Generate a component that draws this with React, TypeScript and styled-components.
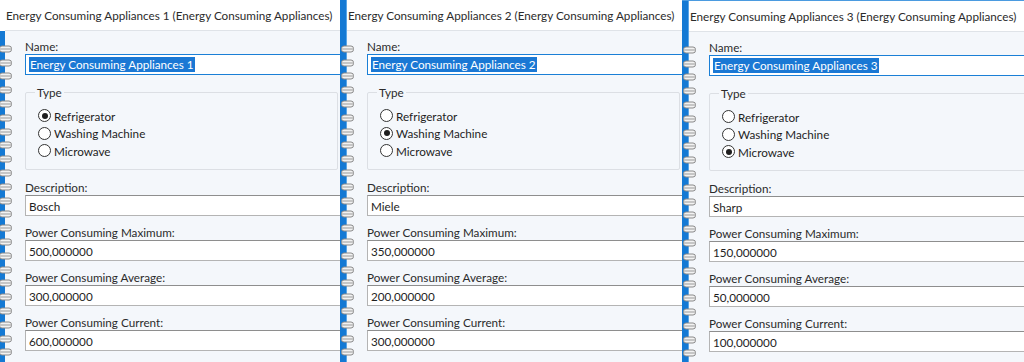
import React from "react"
import styled, { createGlobalStyle } from "styled-components"

const GlobalStyle = createGlobalStyle`
  html, body {
    margin: 0;
    padding: 0;
    background: #ffffff;
    overflow: hidden;
  }
  body {
    font-family: Lato, "Noto Sans", sans-serif;
    font-size: 11.7px;
    color: #1e1e1e;
  }
`

const Desk = styled.div`
  display: flex;
  width: 1030px;
  height: 362px;
  margin-left: -2px;
  overflow: hidden;
`

const Panel = styled.section<{ $width: number; $topLine?: boolean }>`
  display: flex;
  flex: 0 0 ${({ $width }) => $width}px;
  height: 362px;
  overflow: hidden;
  border-top: ${({ $topLine }) => ($topLine ? "1px solid #4b9be0" : "none")};
  box-sizing: border-box;
`

const Spine = styled.div<{ $headless?: boolean }>`
  flex: 0 0 7px;
  background: ${({ $headless }) =>
    $headless
      ? "linear-gradient(to bottom, #ffffff 0 31px, #1479d4 31px)"
      : "linear-gradient(to right, #1479d4 0 6px, #5aa5e6 6px)"};
`

const Main = styled.div`
  flex: 1;
  display: flex;
  flex-direction: column;
  min-width: 0;
`

const Header = styled.div`
  height: 30px;
  flex: 0 0 30px;
  display: flex;
  align-items: center;
  padding-left: 1px;
  background: #ffffff;
  border-bottom: 1px solid #dfe3e8;
  white-space: nowrap;
  color: #2b2b2b;
`

const Body = styled.div`
  flex: 1;
  display: flex;
  background: #f4f7fb;
  min-height: 0;
`

const Rings = styled.div`
  flex: 0 0 16px;
  margin-left: -7px;
  padding-top: 11px;
  display: flex;
  flex-direction: column;
`

const RingCell = styled.div`
  height: 13.8px;
  flex: 0 0 13.8px;
  display: flex;
  align-items: center;
`

const Form = styled.div`
  flex: 1;
  min-width: 0;
  padding: 8px 0 0 11px;
  display: flex;
  flex-direction: column;
`

const Label = styled.div`
  line-height: 15px;
  height: 15px;
  color: #2b2b2b;
  white-space: nowrap;
`

const Input = styled.div<{ $focused?: boolean }>`
  height: 21px;
  box-sizing: border-box;
  border: 1px solid ${({ $focused }) => ($focused ? "#1a7fd6" : "#b4b4b4")};
  border-top-color: ${({ $focused }) => ($focused ? "#1a7fd6" : "#8e8e8e")};
  background: #ffffff;
  display: flex;
  align-items: center;
  padding-left: 3px;
  margin-right: -4px;
  white-space: nowrap;
  color: #1e1e1e;
`

const Selected = styled.span`
  background: #1a78d4;
  color: #ffffff;
  padding: 0 1px;
  line-height: 15px;
`

const Field = styled.div<{ $gap: number }>`
  display: flex;
  flex-direction: column;
  margin-bottom: ${({ $gap }) => $gap}px;
`

const Group = styled.fieldset`
  margin: 0 2px 10px 0;
  padding: 7px 0 8px 12px;
  border: 1px solid #dcdfe4;
  border-radius: 2px;
  height: 85px;
  box-sizing: border-box;
  display: flex;
  flex-direction: column;
  min-width: 0;
`

const Legend = styled.legend`
  padding: 0 2px;
  margin-left: -3px;
  color: #2b2b2b;
  line-height: 15px;
`

const RadioRow = styled.label`
  display: flex;
  align-items: center;
  height: 17.5px;
  gap: 3px;
  color: #1e1e1e;
  white-space: nowrap;
`

const RadioDot = styled.span<{ $checked?: boolean }>`
  width: 13px;
  height: 13px;
  box-sizing: border-box;
  border-radius: 50%;
  border: 1px solid #333333;
  background: #ffffff;
  display: flex;
  align-items: center;
  justify-content: center;
  &::after {
    content: "";
    width: 6px;
    height: 6px;
    border-radius: 50%;
    background: ${({ $checked }) => ($checked ? "#1e1e1e" : "transparent")};
  }
`

function Ring() {
  return (
    <svg width="16" height="8" viewBox="0 0 16 8">
      <rect x="1.5" y="1" width="12" height="6" rx="2.5" fill="#f2f2f2" stroke="#8a8a8a" strokeWidth="1" />
      <line x1="2" y1="4" x2="13" y2="4" stroke="#9a9a9a" strokeWidth="1" />
    </svg>
  )
}

type Appliance = {
  index: number
  type: string
  description: string
  max: string
  avg: string
  current: string
}

const appliances: Appliance[] = [
  { index: 1, type: "Refrigerator", description: "Bosch", max: "500,000000", avg: "300,000000", current: "600,000000" },
  { index: 2, type: "Washing Machine", description: "Miele", max: "350,000000", avg: "200,000000", current: "300,000000" },
  { index: 3, type: "Microwave", description: "Sharp", max: "150,000000", avg: "50,000000", current: "100,000000" },
]

const types = ["Refrigerator", "Washing Machine", "Microwave"]

function AppliancePanel({ item, width }: { item: Appliance; width: number }) {
  const name = `Energy Consuming Appliances ${item.index}`
  return (
    <Panel $width={width} $topLine={item.index === 3}>
      <Spine $headless={item.index === 1} />
      <Main>
        <Header>{name} (Energy Consuming Appliances)</Header>
        <Body>
          <Rings>
            {Array.from({ length: 24 }).map((_, i) => (
              <RingCell key={i}>
                <Ring />
              </RingCell>
            ))}
          </Rings>
          <Form>
            <Field $gap={10}>
              <Label>Name:</Label>
              <Input $focused>
                <Selected>{name}</Selected>
              </Input>
            </Field>
            <Group>
              <Legend>Type</Legend>
              {types.map((t) => (
                <RadioRow key={t}>
                  <RadioDot $checked={t === item.type} />
                  {t}
                </RadioRow>
              ))}
            </Group>
            <Field $gap={9}>
              <Label>Description:</Label>
              <Input>{item.description}</Input>
            </Field>
            <Field $gap={9}>
              <Label>Power Consuming Maximum:</Label>
              <Input>{item.max}</Input>
            </Field>
            <Field $gap={9}>
              <Label>Power Consuming Average:</Label>
              <Input>{item.avg}</Input>
            </Field>
            <Field $gap={9}>
              <Label>Power Consuming Current:</Label>
              <Input>{item.current}</Input>
            </Field>
          </Form>
        </Body>
      </Main>
    </Panel>
  )
}

export default function App() {
  return (
    <>
      <GlobalStyle />
      <Desk>
        <AppliancePanel item={appliances[0]} width={342} />
        <AppliancePanel item={appliances[1]} width={342} />
        <AppliancePanel item={appliances[2]} width={346} />
      </Desk>
    </>
  )
}
